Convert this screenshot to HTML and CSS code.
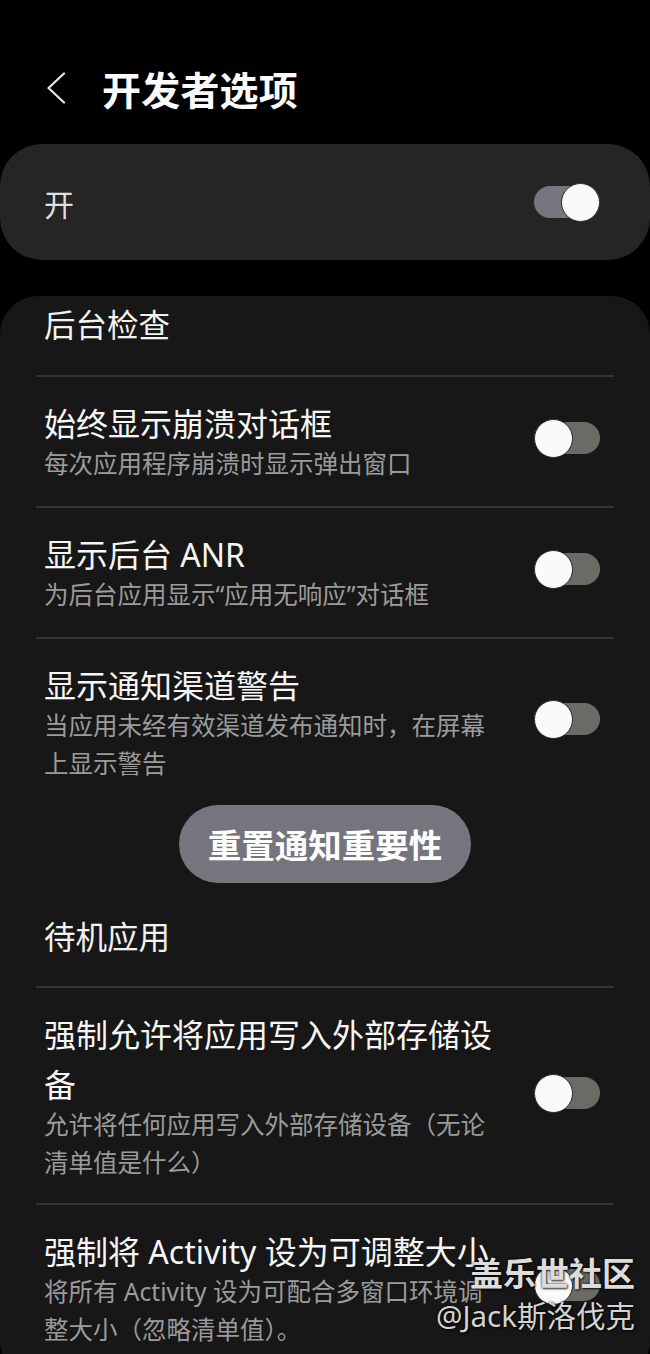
FILE: index.html
```html
<!DOCTYPE html>
<html lang="zh-CN">
<head>
<meta charset="utf-8">
<title>开发者选项</title>
<link rel="stylesheet" href="styles.css">
</head>
<body>
<div class="screen">
  <header class="topbar">
    <svg class="back" viewBox="0 0 20 32" width="20" height="32" aria-hidden="true">
      <polyline points="18,1.5 2.5,16 18,30.5" fill="none" stroke="#e8e8e8" stroke-width="2.2" stroke-linecap="round" stroke-linejoin="round"/>
    </svg>
    <h1 class="title">开发者选项</h1>
  </header>

  <section class="master">
    <span class="master-label">开</span>
    <span class="switch on"><span class="knob"></span></span>
  </section>

  <section class="list">
    <div class="section-head first">后台检查</div>

    <div class="row">
      <div class="text">
        <div class="row-title">始终显示崩溃对话框</div>
        <div class="row-sub">每次应用程序崩溃时显示弹出窗口</div>
      </div>
      <span class="switch"><span class="knob"></span></span>
    </div>

    <div class="row">
      <div class="text">
        <div class="row-title">显示后台 ANR</div>
        <div class="row-sub">为后台应用显示“应用无响应”对话框</div>
      </div>
      <span class="switch"><span class="knob"></span></span>
    </div>

    <div class="row before-btn">
      <div class="text">
        <div class="row-title">显示通知渠道警告</div>
        <div class="row-sub">当应用未经有效渠道发布通知时，在屏幕上显示警告</div>
      </div>
      <span class="switch"><span class="knob"></span></span>
    </div>

    <div class="btn-wrap">
      <button class="pill-btn" type="button">重置通知重要性</button>
    </div>

    <div class="section-head">待机应用</div>

    <div class="row compact">
      <div class="text">
        <div class="row-title">强制允许将应用写入外部存储设备</div>
        <div class="row-sub">允许将任何应用写入外部存储设备（无论清单值是什么）</div>
      </div>
      <span class="switch"><span class="knob"></span></span>
    </div>

    <div class="row">
      <div class="text">
        <div class="row-title">强制将 Activity 设为可调整大小</div>
        <div class="row-sub">将所有 Activity 设为可配合多窗口环境调整大小（忽略清单值）。</div>
      </div>
      <span class="switch"><span class="knob"></span></span>
    </div>
  </section>

  <div class="watermark">
    <div class="wm-brand">盖乐世社区</div>
    <div class="wm-user">@Jack斯洛伐克</div>
  </div>
</div>
</body>
</html>
```

FILE: styles.css
```css
* { box-sizing: border-box; }

html, body {
  margin: 0;
  padding: 0;
  background: #000;
}

body {
  font-family: "Noto Sans", "Noto Sans CJK SC", sans-serif;
  color: #f4f4f4;
}

.screen {
  position: relative;
  width: 650px;
  height: 1354px;
  overflow: hidden;
  background: #000;
}

/* Top bar */
.topbar {
  display: flex;
  align-items: center;
  height: 52px;
  margin: 62px 0 30px;
  padding-left: 46px;
}

.back {
  display: block;
  flex: none;
}

.title {
  margin: 0 0 0 36px;
  font-family: "Noto Sans CJK SC", sans-serif;
  font-size: 39px;
  font-weight: 700;
  line-height: 52px;
  color: #fbfbfb;
  letter-spacing: 0.2px;
}

/* Master switch card */
.master {
  display: flex;
  align-items: center;
  justify-content: space-between;
  height: 116px;
  padding: 2px 50px 0 44px;
  background: #252525;
  border-radius: 42px;
}

.master-label {
  font-family: "Noto Sans CJK SC", sans-serif;
  font-size: 30px;
  line-height: 40px;
  color: #dedede;
}

/* Switches */
.switch {
  flex: none;
  display: flex;
  align-items: center;
  width: 66px;
  height: 32px;
  border-radius: 16px;
  background: #6b6b66;
}

.switch.on {
  justify-content: flex-end;
  background: #76767e;
  margin-bottom: 2px;
}

.knob {
  flex: none;
  width: 39px;
  height: 39px;
  border-radius: 50%;
  background: #fafafa;
  border: 1.5px solid #2a2a2a;
}

/* List card */
.list {
  margin-top: 36px;
  padding: 0 36px 8px;
  background: #171717;
  border-radius: 38px;
}

.section-head {
  padding: 29px 8px 24px;
  font-size: 31.5px;
  line-height: 50px;
  color: #f2f2f2;
}

.section-head.first {
  padding-top: 4px;
  padding-bottom: 25px;
}

.row {
  display: flex;
  align-items: center;
  padding: 22px 14px 23px 8px;
  border-top: 2px solid #343434;
}

.row.before-btn {
  padding-bottom: 22px;
}

.row.compact {
  padding-bottom: 21px;
}

.text {
  flex: 0 0 460px;
  width: 460px;
}

.row .switch {
  margin-left: auto;
  margin-bottom: 6px;
}

.row-title {
  font-size: 32px;
  line-height: 50px;
  color: #f6f6f6;
}

.row-sub {
  margin-top: -4px;
  font-size: 24.5px;
  line-height: 38px;
  color: #9b9b9b;
}

/* Button */
.btn-wrap {
  display: flex;
  justify-content: center;
}

.pill-btn {
  height: 78px;
  padding: 0 29px;
  border: none;
  border-radius: 39px;
  background: #75757d;
  font-family: "Noto Sans CJK SC", sans-serif;
  font-size: 33.5px;
  font-weight: 700;
  color: #fdfdfd;
  line-height: 78px;
}

.btn-wrap + .section-head {
  padding-top: 29px;
}

/* Watermark overlay */
.watermark {
  position: absolute;
  right: 15px;
  top: 1250px;
  text-align: right;
  text-shadow: 0 0 3px rgba(0, 0, 0, 0.85), 1px 1px 2px rgba(0, 0, 0, 0.7);
}

.wm-brand {
  font-family: "Noto Sans CJK SC", sans-serif;
  font-size: 33px;
  font-weight: 700;
  line-height: 44px;
  color: #dcdcdc;
}

.wm-user {
  font-size: 29.5px;
  line-height: 44px;
  color: #d2d2d2;
}
```
